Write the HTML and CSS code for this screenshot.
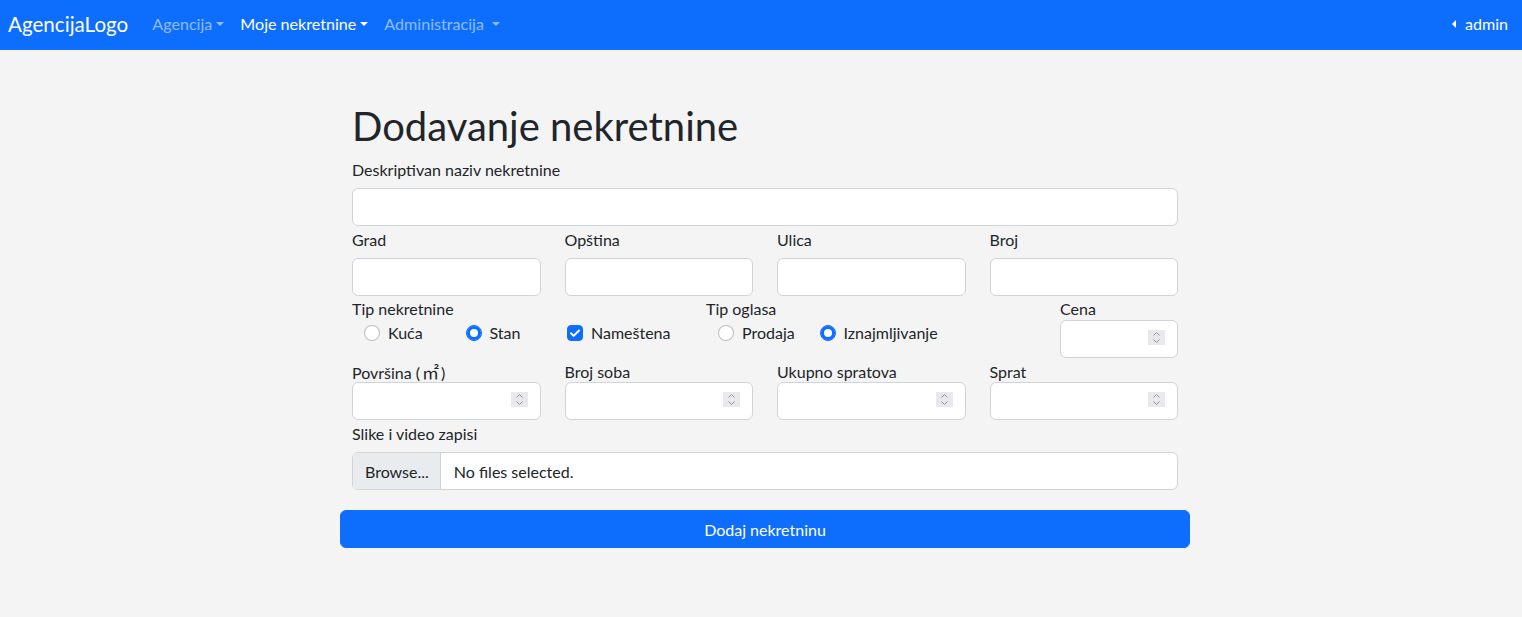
FILE: index.html
```html
<!DOCTYPE html>
<html lang="sr">
<head>
<meta charset="utf-8">
<title>Dodavanje nekretnine</title>
<link rel="stylesheet" href="styles.css">
</head>
<body>
<nav class="navbar">
  <a class="brand" href="#">AgencijaLogo</a>
  <ul class="nav">
    <li><a class="nav-link" href="#">Agencija<span class="caret"></span></a></li>
    <li><a class="nav-link active" href="#">Moje nekretnine<span class="caret"></span></a></li>
    <li><a class="nav-link" href="#">Administracija <span class="caret"></span></a></li>
  </ul>
  <div class="nav-right">
    <a class="nav-link active user" href="#"><span class="caret-left"></span>admin</a>
  </div>
</nav>

<main class="page">
  <form class="form">
    <h1 class="title"><span class="title-text">Dodavanje nekretnine</span></h1>

    <label class="form-label spaced">Deskriptivan naziv nekretnine</label>
    <div class="control"></div>

    <div class="grid4">
      <div class="field">
        <label class="form-label spaced">Grad</label>
        <div class="control"></div>
      </div>
      <div class="field">
        <label class="form-label spaced">Opština</label>
        <div class="control"></div>
      </div>
      <div class="field">
        <label class="form-label spaced">Ulica</label>
        <div class="control"></div>
      </div>
      <div class="field">
        <label class="form-label spaced">Broj</label>
        <div class="control"></div>
      </div>
    </div>

    <div class="grid3">
      <div class="field">
        <label class="form-label tight">Tip nekretnine</label>
        <div class="options">
          <div class="check"><span class="radio"></span><span class="check-text">Kuća</span></div>
          <div class="check"><span class="radio on"></span><span class="check-text">Stan</span></div>
          <div class="check"><span class="box on"><svg viewBox="0 0 16 16" width="16" height="16"><path d="M4 8.3l2.6 2.6L12 5.5" fill="none" stroke="#fff" stroke-width="2" stroke-linecap="round" stroke-linejoin="round"/></svg></span><span class="check-text">Nameštena</span></div>
        </div>
      </div>
      <div class="field">
        <label class="form-label tight">Tip oglasa</label>
        <div class="options">
          <div class="check"><span class="radio"></span><span class="check-text">Prodaja</span></div>
          <div class="check"><span class="radio on"></span><span class="check-text">Iznajmljivanje</span></div>
        </div>
      </div>
      <div class="field">
        <label class="form-label tight">Cena</label>
        <div class="control num"><span class="spin"><svg viewBox="0 0 17 15" width="17" height="15"><path d="M5.5 5.5l3-3 3 3M5.5 9.5l3 3 3-3" fill="none" stroke="#8f8f9d" stroke-width="1"/></svg></span></div>
      </div>
    </div>

    <div class="grid4">
      <div class="field">
        <label class="form-label">Površina (<span class="unit">㎡</span>)</label>
        <div class="control num"><span class="spin"><svg viewBox="0 0 17 15" width="17" height="15"><path d="M5.5 5.5l3-3 3 3M5.5 9.5l3 3 3-3" fill="none" stroke="#8f8f9d" stroke-width="1"/></svg></span></div>
      </div>
      <div class="field">
        <label class="form-label">Broj soba</label>
        <div class="control num"><span class="spin"><svg viewBox="0 0 17 15" width="17" height="15"><path d="M5.5 5.5l3-3 3 3M5.5 9.5l3 3 3-3" fill="none" stroke="#8f8f9d" stroke-width="1"/></svg></span></div>
      </div>
      <div class="field">
        <label class="form-label">Ukupno spratova</label>
        <div class="control num"><span class="spin"><svg viewBox="0 0 17 15" width="17" height="15"><path d="M5.5 5.5l3-3 3 3M5.5 9.5l3 3 3-3" fill="none" stroke="#8f8f9d" stroke-width="1"/></svg></span></div>
      </div>
      <div class="field">
        <label class="form-label">Sprat</label>
        <div class="control num"><span class="spin"><svg viewBox="0 0 17 15" width="17" height="15"><path d="M5.5 5.5l3-3 3 3M5.5 9.5l3 3 3-3" fill="none" stroke="#8f8f9d" stroke-width="1"/></svg></span></div>
      </div>
    </div>

    <label class="form-label spaced">Slike i video zapisi</label>
    <div class="control file">
      <span class="file-btn">Browse...</span>
      <span class="file-name">No files selected.</span>
    </div>

    <button type="button" class="btn-primary"><span class="btn-text">Dodaj nekretninu</span></button>
  </form>
</main>
</body>
</html>
```

FILE: styles.css
```css
* { box-sizing: border-box; }

html, body {
  margin: 0;
  padding: 0;
}

body {
  background: #f4f4f4;
  color: #212529;
  font-family: "Lato", "Noto Sans", sans-serif;
  font-size: 16px;
  line-height: 24px;
}

a { text-decoration: none; }

.navbar {
  height: 50px;
  background: #0d6efd;
  display: flex;
  align-items: center;
  padding: 0 14px 2px 8px;
}

.brand {
  color: #fff;
  font-size: 20.6px;
  line-height: 30px;
  margin-right: 16px;
}

.nav {
  list-style: none;
  margin: 0;
  padding: 0;
  display: flex;
}

.nav-link {
  display: flex;
  align-items: center;
  padding: 0 8px;
  color: rgba(255, 255, 255, 0.55);
  font-size: 16.1px;
  line-height: 24px;
  white-space: pre;
}

.nav-link.active { color: #fff; }

.caret {
  display: inline-block;
  margin-left: 4px;
  width: 0;
  height: 0;
  border-top: 4.5px solid currentColor;
  border-left: 4px solid transparent;
  border-right: 4px solid transparent;
  margin-top: -1px;
}

.nav-right { margin-left: auto; }

.user { padding-right: 0; }

.caret-left {
  display: inline-block;
  width: 0;
  height: 0;
  border-right: 4px solid #fff;
  border-top: 4px solid transparent;
  border-bottom: 4px solid transparent;
  margin-right: 9px;
}

.page {
  width: 850px;
  margin-left: calc(50% - 421px);
  padding-top: 50px;
}

.form {
  padding: 0 12px;
}

.title {
  margin: 0 0 8px;
  height: 48px;
  font-size: 40px;
  line-height: 48px;
  font-weight: 400;
}

.title-text {
  position: relative;
  top: 2px;
}

.form-label {
  display: block;
  height: 24px;
  padding-top: 2px;
  line-height: 24px;
}

.form-label.tight { padding-top: 1px; }

.form-label.spaced { margin-bottom: 8px; }

.unit {
  font-family: "Noto Sans CJK JP", "Noto Sans CJK SC", sans-serif;
  font-size: 17px;
  padding: 0 2px;
}

.control {
  height: 38px;
  background: #fff;
  border: 1px solid #ced4da;
  border-radius: 6px;
}

.num { position: relative; }

.spin {
  position: absolute;
  right: 12px;
  top: 9px;
  width: 17px;
  height: 15px;
  background: #e9e9ed;
  display: block;
}

.spin svg { display: block; }

.grid4 {
  display: grid;
  grid-template-columns: repeat(4, 1fr);
  column-gap: 24px;
}

.grid3 {
  display: grid;
  grid-template-columns: 330fr 330fr 118fr;
  column-gap: 24px;
}

.options {
  display: flex;
  padding-left: 12px;
  padding-top: 1px;
}

.check {
  width: 101.5px;
  display: flex;
  align-items: flex-start;
  line-height: 24px;
  white-space: nowrap;
}

.check-text {
  margin-left: 8px;
}

.radio, .box {
  flex: none;
  width: 16px;
  height: 16px;
  margin-top: 4px;
  border: 1px solid rgba(0, 0, 0, 0.25);
  background: #fff;
  display: block;
}

.radio { border-radius: 50%; }

.radio.on {
  background: #0d6efd;
  border-color: #0d6efd;
  box-shadow: inset 0 0 0 3px #0d6efd, inset 0 0 0 8px #fff;
}

.box { border-radius: 4px; }

.box.on {
  background: #0d6efd;
  border-color: #0d6efd;
}

.box svg {
  display: block;
  margin: -1px;
}

.file {
  display: flex;
  align-items: center;
  overflow: hidden;
}

.file-btn {
  height: 100%;
  display: flex;
  align-items: center;
  padding: 2px 11px 0 12px;
  background: #e9ecef;
  border-right: 1px solid #ced4da;
}

.file-name { padding: 2px 0 0 13px; }

.btn-primary {
  display: block;
  width: calc(100% + 24px);
  margin: 20px -12px 0;
  height: 38px;
  border: 1px solid #0d6efd;
  border-radius: 6px;
  background: #0d6efd;
  color: #fff;
  font-family: inherit;
  font-size: 16px;
  line-height: 24px;
  cursor: pointer;
}

.btn-text {
  position: relative;
  top: 1px;
}
```
